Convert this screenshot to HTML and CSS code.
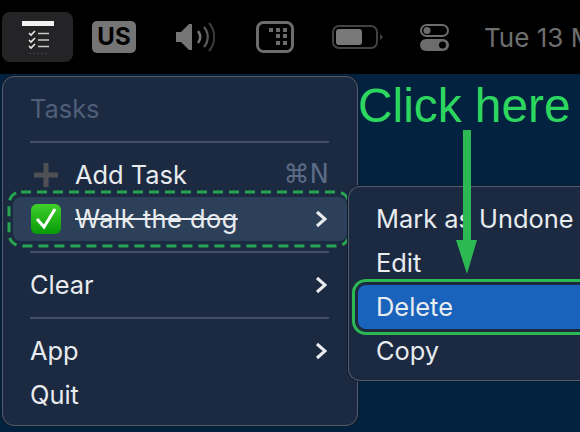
FILE: index.html
```html
<!DOCTYPE html>
<html lang="en">
<head>
    <meta charset="UTF-8">
    <meta name="viewport" content="width=device-width, initial-scale=1.0">
    <title>Tasks menu</title>
    <link rel="stylesheet" href="styles.css">
</head>
<body>
    <div class="menubar">
        <div class="tray-app">
            <svg width="71" height="50" viewBox="0 0 71 50">
                <rect x="20" y="9" width="32" height="5" fill="#f2f2f2"/>
                <path d="M27 21l2 2 4-4M27 28l2 2 4-4M27 34l2 2 4-4" fill="none" stroke="#e8e8e8" stroke-width="1.6"/>
                <path d="M36 21.500h11M36 28h11M36 34.500h11" stroke="#c8c8c8" stroke-width="1.500"/>
                <path d="M27 41.500h20" stroke="#3c3c3e" stroke-width="1.500" stroke-dasharray="2 2"/>
            </svg>
        </div>
        <div class="tray-us">US</div>
        <svg class="tray-sound" width="39" height="30" viewBox="0 0 39 30">
            <path d="M0 10h5l8-8h3v26h-3l-8-8H0z" fill="#757575"/>
            <path d="M22 9c3 4 3 8 0 12" fill="none" stroke="#757575" stroke-width="2.500"/>
            <path d="M28 5c5 6 5 14 0 20" fill="none" stroke="#5a5a5a" stroke-width="2.200"/>
            <path d="M33 1c7 8 7 20 0 28" fill="none" stroke="#3c3c3c" stroke-width="2"/>
        </svg>
        <svg class="tray-grid" width="38" height="32" viewBox="0 0 38 32">
            <rect x="1.500" y="1.500" width="35" height="29" rx="6" fill="none" stroke="#6c6c6c" stroke-width="3"/>
            <path d="M13 7h4v4h-4zM20 7h4v4h-4zM27 7h4v4h-4zM20 13h4v4h-4zM27 13h4v4h-4zM20 20h4v4h-4zM27 20h4v4h-4z" fill="#6c6c6c"/>
        </svg>
        <svg class="tray-battery" width="51" height="24" viewBox="0 0 51 24">
            <rect x="1" y="1" width="44" height="22" rx="6" fill="none" stroke="#424242" stroke-width="2"/>
            <rect x="4" y="4" width="26" height="16" rx="3" fill="#787878"/>
            <path d="M48 9l3 3-3 3z" fill="#424242"/>
        </svg>
        <svg class="tray-toggles" width="29" height="27" viewBox="0 0 29 27">
            <rect x="1" y="1" width="27" height="11" rx="5.500" fill="none" stroke="#6c6c6c" stroke-width="2"/>
            <circle cx="7" cy="6.500" r="3.500" fill="#6c6c6c"/>
            <rect x="0" y="15" width="29" height="12" rx="6" fill="#6c6c6c"/>
            <circle cx="22.500" cy="21" r="3.500" fill="#000"/>
        </svg>
        <div class="tray-date">Tue 13 M</div>
    </div>

    <div class="desktop">
        <div class="menu">
            <div class="row title">Tasks</div>
            <div class="sep"></div>
            <div class="row">
                <svg class="row-icon" width="32" height="24" viewBox="0 0 32 24">
                    <path d="M16 0v24M4 12h24" stroke="#4f5054" stroke-width="5"/>
                </svg>
                <span class="label">Add Task</span>
                <span class="shortcut">⌘N</span>
            </div>
            <div class="row active">
                <svg class="row-icon" width="32" height="32" viewBox="0 0 32 32">
                    <defs>
                        <linearGradient id="tick" x1="0" y1="0" x2="0" y2="1">
                            <stop offset="0" stop-color="#3fd02a"/>
                            <stop offset="1" stop-color="#079a08"/>
                        </linearGradient>
                    </defs>
                    <rect x="1" y="1" width="30" height="30" rx="6" fill="url(#tick)"/>
                    <path d="M7 16l7 8L25 6" fill="none" stroke="#fff" stroke-width="3"/>
                </svg>
                <span class="label done">Walk the dog</span>
                <svg class="chevron" width="12" height="18" viewBox="0 0 12 18"><path d="M2 2l8 7-8 7" /></svg>
            </div>
            <div class="sep"></div>
            <div class="row">
                <span class="label">Clear</span>
                <svg class="chevron" width="12" height="18" viewBox="0 0 12 18"><path d="M2 2l8 7-8 7" /></svg>
            </div>
            <div class="sep"></div>
            <div class="row">
                <span class="label">App</span>
                <svg class="chevron" width="12" height="18" viewBox="0 0 12 18"><path d="M2 2l8 7-8 7" /></svg>
            </div>
            <div class="row">
                <span class="label">Quit</span>
            </div>
        </div>

        <svg class="dashes" width="344" height="58" viewBox="0 0 344 58">
            <rect x="2" y="2" width="340" height="54" rx="12" fill="none" stroke="#27a651" stroke-width="3" stroke-dasharray="10 6"/>
        </svg>

        <div class="submenu">
            <div class="row">Mark as Undone</div>
            <div class="row">Edit</div>
            <div class="row selected">Delete</div>
            <div class="row">Copy</div>
        </div>

        <div class="click-here">Click here</div>
        <svg class="arrow" width="24" height="146" viewBox="0 0 24 146">
            <path d="M8 0h8v110h6L12 144 1 110h7z" fill="#2cb852"/>
        </svg>
    </div>
</body>
</html>
```

FILE: styles.css
```css
html, body {
    margin: 0;
    height: 100%;
    overflow: hidden;
}
body {
    width: 580px;
    height: 432px;
    font-family: Inter, "Noto Sans", sans-serif;
    background-color: #02223f;
    color: #e9ecef;
}
.menubar {
    height: 74px;
    background-color: #000;
    display: flex;
    align-items: center;
    white-space: nowrap;
    overflow: hidden;
}
.menubar > * {
    flex: none;
}
.tray-app {
    margin-left: 2px;
    margin-top: -1px;
    width: 71px;
    height: 50px;
    background-color: #242426;
    border-radius: 8px;
    display: flex;
}
.tray-us {
    margin-left: 19px;
    width: 44px;
    height: 32px;
    background-color: #757575;
    border-radius: 5px;
    color: #000;
    font-size: 24px;
    font-weight: 700;
    line-height: 32px;
    text-align: center;
}
.tray-sound { margin-left: 40px; }
.tray-grid { margin-left: 41px; }
.tray-battery { margin-left: 38px; margin-top: -1px; }
.tray-toggles { margin-left: 37px; }
.tray-date {
    margin-left: 35px;
    font-size: 26px;
    color: #6e6e6e;
}

.desktop {
    position: relative;
    height: 358px;
    padding: 2px;
    box-sizing: border-box;
    overflow: hidden;
}
.menu {
    width: 356px;
    height: 350px;
    box-sizing: border-box;
    padding: 10px 10px 0;
    background-color: #1b2a41;
    border: 1px solid #535d6e;
    border-radius: 12px;
    box-shadow: 0 0 0 1px #0c1a2b;
}
.row {
    display: flex;
    align-items: center;
    box-sizing: border-box;
    height: 44px;
    padding: 0 18px 2px 17px;
    border-radius: 8px;
    font-size: 25.4px;
    white-space: nowrap;
}
.title {
    color: #4f5f79;
}
.sep {
    height: 2px;
    margin: 10px 18px 10px 17px;
    background-color: #414e66;
}
.active {
    background-color: #2c4159;
}
.row-icon {
    margin-top: 2px;
    margin-right: 13px;
    flex: none;
}
.label {
    flex: 1;
}
.done {
    flex: none;
    margin-right: auto;
    letter-spacing: 0.5px;
    text-decoration: line-through;
}
.shortcut {
    color: #5b6b86;
    font-family: "DejaVu Sans", sans-serif;
    font-size: 26px;
}
.chevron {
    flex: none;
    margin-top: 2px;
    margin-right: 2px;
}
.chevron path {
    fill: none;
    stroke: #e9ecef;
    stroke-width: 3;
}

.dashes {
    position: absolute;
    left: 7px;
    top: 116px;
}
.submenu {
    position: absolute;
    left: 348px;
    top: 112px;
    width: 232px;
    height: 195px;
    box-sizing: border-box;
    padding: 10px 0 0 9px;
    background-color: #1b2a41;
    border: 1px solid #535d6e;
    border-right: 0;
    border-radius: 12px 0 0 12px;
    box-shadow: 0 0 0 1px #0c1a2b;
}
.submenu .row {
    padding-left: 18px;
    padding-right: 0;
}
.selected {
    background-color: #1a63bd;
    border-radius: 8px 0 0 8px;
    outline: 3px solid #2cb852;
    outline-offset: 3px;
    clip-path: inset(-6px 0 -6px -6px);
}
.click-here {
    position: absolute;
    left: 358px;
    top: 4px;
    font-family: "Liberation Sans", Arial, sans-serif;
    font-size: 47.8px;
    color: #2dd75f;
    white-space: nowrap;
}
.arrow {
    position: absolute;
    left: 455px;
    top: 56px;
}
```
